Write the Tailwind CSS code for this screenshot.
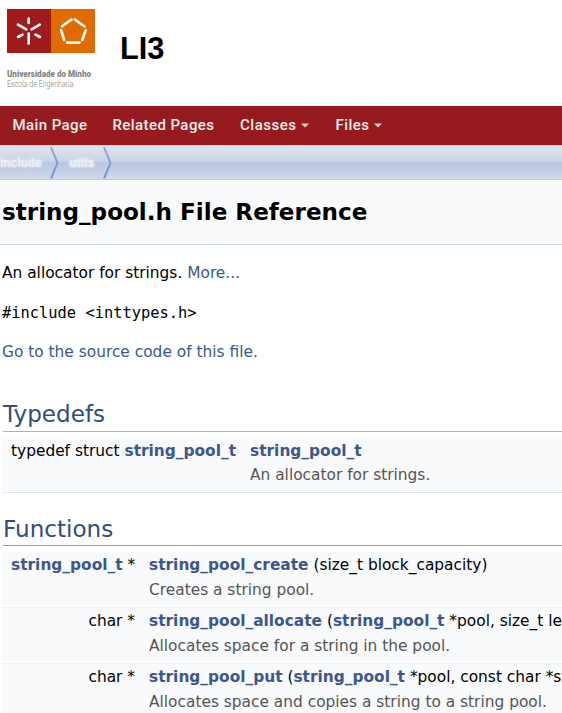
<!DOCTYPE html>
<html lang="en">
<head>
<meta charset="utf-8">
<title>LI3: string_pool.h File Reference</title>
<script src="https://cdn.jsdelivr.net/npm/@tailwindcss/browser@4"></script>
</head>
<body class="bg-white text-black text-[15.4px] leading-[22px] font-['DejaVu_Sans',sans-serif] w-[562px] h-[713px] overflow-hidden">
<header class="h-[106px] flex">
  <svg class="w-[120px] h-[100px] shrink-0" viewBox="0 0 120 100">
    <rect x="7" y="9" width="44" height="44" fill="#a01b1d"/>
    <rect x="51" y="9" width="44" height="44" fill="#e16b00"/>
    <g stroke="#fff" stroke-width="2.6" stroke-linecap="round" fill="none">
      <path d="M28.7 18.5V23M28.7 33.5V43.500M18 24.600L26.300 29.300M39.800 24.600L31.500 29.300M18 37L22.500 34.600M40 37L35.500 34.600"/>
      <path d="M71.500 19.500L62 26.200M74.800 19.500L84.500 26.500M61 30L64.200 39.800M85.700 30.300L82.200 40M67 42.600H79.500"/>
    </g>
    <text x="7" y="76.8" font-family="Roboto" font-size="8.3" font-weight="900" fill="#858585" textLength="84" lengthAdjust="spacingAndGlyphs">Universidade do Minho</text>
    <text x="7" y="86.8" font-family="Roboto" font-size="8.3" font-weight="300" fill="#808080" textLength="66.5" lengthAdjust="spacingAndGlyphs">Escola de Engenharia</text>
  </svg>
  <div class="pt-[31px] text-[30.8px] leading-[36px] font-bold font-['Liberation_Sans',sans-serif]">LI3</div>
</header>
<nav class="h-[39px] bg-[#971b1e] pl-[13px]">
  <svg class="w-[380px] h-[38px]" viewBox="0 0 380 38" fill="#f3eeee" font-family="Roboto" font-weight="500" font-size="15">
    <text x="-0.5" y="24" textLength="74.500">Main Page</text>
    <text x="99.500" y="24" textLength="101.500">Related Pages</text>
    <text x="227" y="24" textLength="56">Classes</text>
    <path d="M288 17.500h8l-4 4z" opacity=".85"/>
    <text x="322.500" y="24" textLength="33.500">Files</text>
    <path d="M361 17.500h8l-4 4z" opacity=".85"/>
  </svg>
</nav>
<div class="h-[35px] border-t border-b border-t-[#c4cfe5] border-b-[#c2cde4] bg-[linear-gradient(#dfe5f1_0%,#c9d3e7_47%,#b9c7e1_50%,#c1cce4_72%,#d3dbeb_100%)]">
  <svg class="w-[130px] h-[33px]" viewBox="0 0 130 33">
    <defs><linearGradient id="sep" x1="0" y1="0" x2="0" y2="1"><stop stop-color="#95a8d0"/><stop offset="1" stop-color="#6e8cc8"/></linearGradient></defs>
    <g class="[text-shadow:0_0_3px_white]" font-family="Liberation Sans" font-weight="700" font-size="13" fill="#eceef2">
      <text x="0" y="21" textLength="41.500" lengthAdjust="spacingAndGlyphs">include</text><text x="69" y="21" textLength="25.500" lengthAdjust="spacingAndGlyphs">utils</text>
    </g>
    <path d="M50 1h2l6.500 16l-6.500 15.500h-2l6.500-15.500zM103 1h2l6.500 16l-6.500 15.500h-2l6.500-15.500z" fill="url(#sep)"/>
  </svg>
</div>
<div class="h-[65px] bg-[#f9fafc] border-b border-[#c4cfe5] pl-[2px] pt-[16px] text-[23.1px] leading-[32px] font-bold whitespace-nowrap">string_pool.h File Reference</div>
<main class="pl-[2px] whitespace-nowrap overflow-hidden">
  <p class="pt-[17px]">An allocator for strings. <a class="text-[#3d578c]">More...</a></p>
  <p class="pt-[18px] font-['DejaVu_Sans_Mono',monospace]">#include &lt;inttypes.h&gt;</p>
  <p class="pt-[17px]"><a class="text-[#3d578c]">Go to the source code of this file.</a></p>
  <h2 class="ml-[1px] mt-[34px] h-[35px] border-b border-[#a0b2d8] text-[23.1px] leading-[34px] text-[#354c7b]">Typedefs</h2>
  <div class="mt-[5px] h-[54px] bg-[#f9fafc] pl-[9px] grid grid-cols-[225px_1fr] gap-x-[14px] content-start pt-[3px] leading-[22px] gap-y-[2px]">
    <div class="text-right">typedef struct <b class="text-[#3d578c]">string_pool_t</b></div><div><b class="text-[#3d578c]">string_pool_t</b></div>
    <div class="col-start-2 text-[#555]">An allocator for strings.</div>
  </div>
  <div class="mt-[1px] border-b border-[#dee4f0]"></div>
  <h2 class="ml-[1px] mt-[18px] h-[35px] border-b border-[#879ecb] text-[23.1px] leading-[36px] text-[#354c7b]">Functions</h2>
  <div class="mt-[6px] h-[53px] bg-[#f9fafc] pl-[9px] grid grid-cols-[124px_1fr] gap-x-[14px] content-start pt-[2px] gap-y-[3px]">
    <div class="text-right"><b class="text-[#3d578c]">string_pool_t</b> *</div><div><b class="text-[#3d578c]">string_pool_create</b> (size_t block_capacity)</div>
    <div class="col-start-2 text-[#555]">Creates a string pool.</div>
  </div>
  <div class="mt-[2px] h-[54px] border-t border-[#eef1f7] bg-[#f9fafc] pl-[9px] grid grid-cols-[124px_1fr] gap-x-[14px] content-start pt-[2px] gap-y-[3px]">
    <div class="text-right">char *</div><div><b class="text-[#3d578c]">string_pool_allocate</b> (<b class="text-[#3d578c]">string_pool_t</b> *pool, size_t le</div>
    <div class="col-start-2 text-[#555]">Allocates space for a string in the pool.</div>
  </div>
  <div class="mt-[2px] h-[54px] border-t border-[#eef1f7] bg-[#f9fafc] pl-[9px] grid grid-cols-[124px_1fr] gap-x-[14px] content-start pt-[2px] gap-y-[3px]">
    <div class="text-right">char *</div><div><b class="text-[#3d578c]">string_pool_put</b> (<b class="text-[#3d578c]">string_pool_t</b> *pool, const char *st</div>
    <div class="col-start-2 text-[#555]">Allocates space and copies a string to a string pool.</div>
  </div>
</main>
</body>
</html>
